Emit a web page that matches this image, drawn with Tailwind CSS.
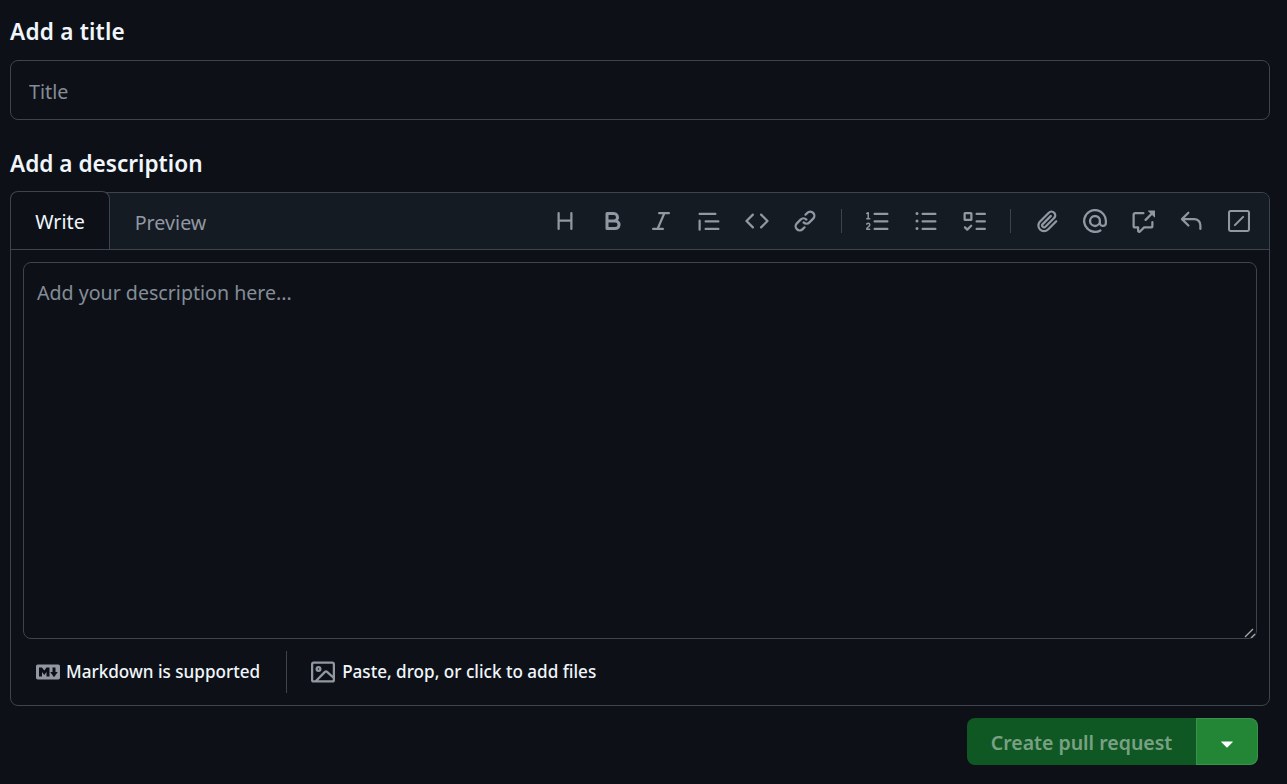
<!DOCTYPE html>
<html lang="en">
<head>
    <meta charset="UTF-8">
    <title>Open a pull request</title>
    <script src="https://cdn.jsdelivr.net/npm/@tailwindcss/browser@4"></script>
</head>
<body class="bg-[#0d1117] font-['Noto_Sans','Open_Sans',sans-serif] [color-scheme:dark] overflow-hidden">
    <div class="w-[1287px] h-[784px] pl-[10px] pr-[17px] pt-[16px]">
        <h2 class="text-[22.6px] leading-[32px] font-semibold text-[#f0f6fc] tracking-[0.2px]">Add a title</h2>
        <input type="text" placeholder="Title" class="block w-full h-[60px] mt-[12px] px-[18px] pt-[3px] text-[19.7px] bg-[#0d1117] border border-[#3d444d] rounded-[8px] placeholder:text-[#848d97] outline-none">

        <h2 class="mt-[28px] text-[22.6px] leading-[32px] font-semibold text-[#f0f6fc]">Add a description</h2>

        <div class="mt-[12px] h-[514px] border border-[#3d444d] rounded-[8px] flex flex-col">
            <!-- toolbar -->
            <div class="h-[57px] shrink-0 flex items-stretch bg-[#151b23] border-b border-[#3d444d] rounded-t-[8px]">
                <div class="w-[100px] h-[58px] -mt-[2px] -ml-[1px] pt-[3px] bg-[#0d1117] border border-b-0 border-[#3d444d] rounded-t-[8px] flex items-center justify-center text-[19.7px] text-[#f0f6fc]">Write</div>
                <div class="w-[123px] -ml-[1px] pt-[3px] flex items-center justify-center text-[19.7px] text-[#9198a1]">Preview</div>
                <div class="ml-auto pr-[6px] flex items-center text-[#9198a1]">
                    <span class="w-[48px] flex justify-center"><svg class="w-[24px] h-[24px]" viewBox="0 0 16 16" fill="currentColor"><path d="M3.75 2a.75.75 0 0 1 .75.75V7h7V2.75a.75.75 0 0 1 1.5 0v10.5a.75.75 0 0 1-1.5 0V8.5h-7v4.75a.75.75 0 0 1-1.5 0V2.75A.75.75 0 0 1 3.75 2Z"/></svg></span>
                    <span class="w-[48px] flex justify-center"><svg class="w-[24px] h-[24px]" viewBox="0 0 16 16" fill="currentColor"><path d="M4 2h4.5a3.501 3.501 0 0 1 2.852 5.53A3.499 3.499 0 0 1 9.5 14H4a1 1 0 0 1-1-1V3a1 1 0 0 1 1-1Zm1 7v3h4.5a1.5 1.5 0 0 0 0-3Zm3.5-2a1.5 1.5 0 0 0 0-3H5v3Z"/></svg></span>
                    <span class="w-[48px] flex justify-center"><svg class="w-[24px] h-[24px]" viewBox="0 0 16 16" fill="currentColor"><path d="M6 2.75A.75.75 0 0 1 6.75 2h6.5a.75.75 0 0 1 0 1.5h-2.505l-3.858 9H9.25a.75.75 0 0 1 0 1.5h-6.5a.75.75 0 0 1 0-1.5h2.505l3.858-9H6.75A.75.75 0 0 1 6 2.75Z"/></svg></span>
                    <span class="w-[48px] flex justify-center"><svg class="w-[24px] h-[24px]" viewBox="0 0 16 16" fill="currentColor"><path d="M1.75 2.5h10.5a.75.75 0 0 1 0 1.5H1.75a.75.75 0 0 1 0-1.5Zm4 5h8.5a.75.75 0 0 1 0 1.5h-8.5a.75.75 0 0 1 0-1.5Zm0 5h8.5a.75.75 0 0 1 0 1.5h-8.5a.75.75 0 0 1 0-1.5ZM2.5 7.75v6a.75.75 0 0 1-1.5 0v-6a.75.75 0 0 1 1.5 0Z"/></svg></span>
                    <span class="w-[48px] flex justify-center"><svg class="w-[24px] h-[24px]" viewBox="0 0 16 16" fill="currentColor"><path d="m11.28 3.22 4.25 4.25a.75.75 0 0 1 0 1.06l-4.25 4.25a.749.749 0 0 1-1.275-.326.749.749 0 0 1 .215-.734L13.94 8l-3.72-3.72a.749.749 0 0 1 .326-1.275.749.749 0 0 1 .734.215Zm-6.56 0a.751.751 0 0 1 1.042.018.751.751 0 0 1 .018 1.042L2.06 8l3.72 3.72a.749.749 0 0 1-.326 1.275.749.749 0 0 1-.734-.215L.47 8.53a.75.75 0 0 1 0-1.06Z"/></svg></span>
                    <span class="w-[48px] flex justify-center"><svg class="w-[24px] h-[24px]" viewBox="0 0 16 16" fill="currentColor"><path d="m7.775 3.275 1.25-1.25a3.5 3.5 0 1 1 4.95 4.95l-2.5 2.5a3.5 3.5 0 0 1-4.95 0 .751.751 0 0 1 .018-1.042.751.751 0 0 1 1.042-.018 1.998 1.998 0 0 0 2.83 0l2.5-2.5a2.002 2.002 0 0 0-2.83-2.83l-1.25 1.25a.751.751 0 0 1-1.042-.018.751.751 0 0 1-.018-1.042Zm-4.69 9.64a1.998 1.998 0 0 0 2.83 0l1.25-1.25a.751.751 0 0 1 1.042.018.751.751 0 0 1 .018 1.042l-1.25 1.25a3.5 3.5 0 1 1-4.95-4.95l2.5-2.5a3.5 3.5 0 0 1 4.95 0 .751.751 0 0 1-.018 1.042.751.751 0 0 1-1.042.018 1.998 1.998 0 0 0-2.83 0l-2.5 2.5a1.998 1.998 0 0 0 0 2.83Z"/></svg></span>
                    <span class="w-[1px] h-[24px] mx-[12px] bg-[#3d444d]"></span>
                    <span class="w-[48px] flex justify-center"><svg class="w-[24px] h-[24px]" viewBox="0 0 16 16" fill="currentColor"><path d="M5 3.25a.75.75 0 0 1 .75-.75h8.5a.75.75 0 0 1 0 1.5h-8.5A.75.75 0 0 1 5 3.25Zm0 5a.75.75 0 0 1 .75-.75h8.5a.75.75 0 0 1 0 1.5h-8.5A.75.75 0 0 1 5 8.25Zm0 5a.75.75 0 0 1 .75-.75h8.5a.75.75 0 0 1 0 1.5h-8.5a.75.75 0 0 1-.75-.75ZM.924 10.32a.5.5 0 0 1-.851-.525l.001-.001.001-.002.002-.004.007-.011c.097-.144.215-.273.348-.384.228-.19.588-.392 1.068-.392.468 0 .858.181 1.126.484.259.294.377.673.377 1.038 0 .987-.686 1.495-1.156 1.845l-.047.035c-.303.225-.522.4-.654.597h1.357a.5.5 0 0 1 0 1H.5a.5.5 0 0 1-.5-.5c0-1.005.692-1.52 1.167-1.875l.035-.025c.531-.396.8-.625.8-1.078a.57.57 0 0 0-.128-.376C1.806 10.068 1.695 10 1.5 10a.658.658 0 0 0-.429.163.835.835 0 0 0-.144.153ZM2.003 2.5V6h.503a.5.5 0 0 1 0 1H.5a.5.5 0 0 1 0-1h.503V3.308l-.28.14a.5.5 0 0 1-.446-.895l1.003-.5a.5.5 0 0 1 .723.447Z"/></svg></span>
                    <span class="w-[48px] flex justify-center"><svg class="w-[24px] h-[24px]" viewBox="0 0 16 16" fill="currentColor"><path d="M5.75 2.5h8.5a.75.75 0 0 1 0 1.5h-8.5a.75.75 0 0 1 0-1.5Zm0 5h8.5a.75.75 0 0 1 0 1.5h-8.5a.75.75 0 0 1 0-1.5Zm0 5h8.5a.75.75 0 0 1 0 1.5h-8.5a.75.75 0 0 1 0-1.5ZM2 14a1 1 0 1 1 0-2 1 1 0 0 1 0 2Zm1-6a1 1 0 1 1-2 0 1 1 0 0 1 2 0ZM2 4a1 1 0 1 1 0-2 1 1 0 0 1 0 2Z"/></svg></span>
                    <span class="w-[48px] flex justify-center"><svg class="w-[24px] h-[24px]" viewBox="0 0 16 16" fill="currentColor"><path d="M2 2h4a1 1 0 0 1 1 1v4a1 1 0 0 1-1 1H2a1 1 0 0 1-1-1V3a1 1 0 0 1 1-1Zm4.655 8.595a.75.75 0 0 1 0 1.06L4.03 14.28a.75.75 0 0 1-1.06 0l-1.5-1.5a.749.749 0 0 1 .326-1.275.749.749 0 0 1 .734.215l.97.97 2.095-2.095a.75.75 0 0 1 1.06 0ZM9.75 2.5h5.5a.75.75 0 0 1 0 1.5h-5.5a.75.75 0 0 1 0-1.5Zm0 5h5.5a.75.75 0 0 1 0 1.5h-5.5a.75.75 0 0 1 0-1.5Zm0 5h5.5a.75.75 0 0 1 0 1.5h-5.5a.75.75 0 0 1 0-1.5Zm-7.25-9v3h3v-3Z"/></svg></span>
                    <span class="w-[1px] h-[24px] mx-[12px] bg-[#3d444d]"></span>
                    <span class="w-[48px] flex justify-center"><svg class="w-[24px] h-[24px]" viewBox="0 0 16 16" fill="currentColor"><path d="M12.212 3.02a1.753 1.753 0 0 0-2.478.003l-5.83 5.83a3.007 3.007 0 0 0-.88 2.127c0 .795.315 1.551.88 2.116.567.567 1.333.89 2.126.89.79 0 1.548-.321 2.116-.89l5.48-5.48a.75.75 0 0 1 1.061 1.06l-5.48 5.48a4.492 4.492 0 0 1-3.177 1.33c-1.2 0-2.345-.487-3.187-1.33a4.483 4.483 0 0 1-1.32-3.177c0-1.195.475-2.341 1.32-3.186l5.83-5.83a3.25 3.25 0 0 1 5.553 2.297c0 .863-.343 1.691-.953 2.301L7.439 12.39c-.375.377-.884.59-1.416.593a1.998 1.998 0 0 1-1.412-.593 1.992 1.992 0 0 1 0-2.828l5.48-5.48a.751.751 0 0 1 1.042.018.751.751 0 0 1 .018 1.042l-5.48 5.48a.492.492 0 0 0 0 .707.499.499 0 0 0 .354.147.51.51 0 0 0 .361-.147l5.833-5.827a1.755 1.755 0 0 0 0-2.481Z"/></svg></span>
                    <span class="w-[48px] flex justify-center"><svg class="w-[24px] h-[24px]" viewBox="0 0 16 16" fill="currentColor"><path d="M4.75 2.37a6.501 6.501 0 0 0 6.5 11.26.75.75 0 0 1 .75 1.298A7.999 7.999 0 0 1 .989 4.148 8 8 0 0 1 16 7.75v1.5a2.75 2.75 0 0 1-5.072 1.475 3.999 3.999 0 0 1-6.65-4.19A4 4 0 0 1 12 8v1.25a1.25 1.25 0 0 0 2.5 0V7.867a6.5 6.5 0 0 0-9.75-5.496ZM10.5 8a2.5 2.5 0 1 0-5 0 2.5 2.5 0 0 0 5 0Z"/></svg></span>
                    <span class="w-[48px] flex justify-center"><svg class="w-[24px] h-[24px]" viewBox="0 0 16 16" fill="currentColor"><path d="M2.75 3.5a.25.25 0 0 0-.25.25v7.5c0 .138.112.25.25.25h2a.75.75 0 0 1 .75.75v2.19l2.72-2.72a.749.749 0 0 1 .53-.22h4.5a.25.25 0 0 0 .25-.25v-2.5a.75.75 0 0 1 1.5 0v2.5A1.75 1.75 0 0 1 13.25 13H9.06l-2.573 2.573A1.458 1.458 0 0 1 4 14.543V13H2.75A1.75 1.75 0 0 1 1 11.25v-7.5C1 2.784 1.784 2 2.75 2h5.5a.75.75 0 0 1 0 1.5ZM16 1.25v4.146a.25.25 0 0 1-.427.177L14.03 4.03l-3.75 3.75a.749.749 0 0 1-1.275-.326.749.749 0 0 1 .215-.734l3.75-3.75-1.543-1.543A.25.25 0 0 1 11.604 1h4.146a.25.25 0 0 1 .25.25Z"/></svg></span>
                    <span class="w-[48px] flex justify-center"><svg class="w-[24px] h-[24px]" viewBox="0 0 16 16" fill="currentColor"><path d="M6.78 1.97a.75.75 0 0 1 0 1.06L3.81 6h6.44A4.75 4.75 0 0 1 15 10.75v2.5a.75.75 0 0 1-1.5 0v-2.5a3.25 3.25 0 0 0-3.25-3.25H3.81l2.97 2.97a.749.749 0 0 1-.326 1.275.749.749 0 0 1-.734-.215L1.47 7.28a.75.75 0 0 1 0-1.06l4.25-4.25a.75.75 0 0 1 1.06 0Z"/></svg></span>
                    <span class="w-[48px] flex justify-center"><svg class="w-[22px] h-[22px]" viewBox="0 0 16 16" fill="currentColor"><path fill-rule="evenodd" d="M1.75 0h12.5C15.216 0 16 .784 16 1.75v12.5A1.75 1.75 0 0 1 14.25 16H1.75A1.75 1.75 0 0 1 0 14.25V1.75C0 .784.784 0 1.75 0Zm0 1.5a.25.25 0 0 0-.25.25v12.5c0 .138.112.25.25.25h12.5a.25.25 0 0 0 .25-.25V1.75a.25.25 0 0 0-.25-.25Z"/><path d="M10.47 4.47a.75.75 0 0 1 1.06 1.06l-6 6a.75.75 0 0 1-1.06-1.06Z"/></svg></span>
                </div>
            </div>

            <!-- body -->
            <div class="flex-1 px-[12px] pt-[12px] flex flex-col">
                <div class="relative h-[377px] shrink-0">
                    <textarea placeholder="Add your description here..." class="block w-full h-full resize-none px-[13px] pt-[16px] pb-[12px] text-[19.6px] leading-[28px] bg-[#0d1117] border border-[#3d444d] rounded-[8px] placeholder:text-[#848d97] outline-none"></textarea>
                    <svg class="absolute right-[1px] bottom-[1px] w-[12px] h-[11px] text-[#a8a8a8]" viewBox="0 0 12 11" fill="none" stroke="currentColor" stroke-width="1.3"><path d="M1 10 9 2M7 11l4-4"/></svg>
                </div>
                <div class="flex-1 flex items-center text-[#f0f6fc] text-[17.1px] font-medium">
                    <svg class="ml-[13px] w-[24px] h-[24px] text-[#9198a1]" viewBox="0 0 16 16" fill="currentColor"><path d="M14.85 3c.63 0 1.15.52 1.14 1.15v7.7c0 .63-.51 1.15-1.15 1.15H1.15C.52 13 0 12.48 0 11.84V4.15C0 3.52.52 3 1.15 3ZM9 11V5H7L5.5 7 4 5H2v6h2V8l1.5 1.92L7 8v3Zm2.99.5L14.5 8H13V5h-2v3H9.5Z"/></svg>
                    <span class="ml-[6px]">Markdown is supported</span>
                    <span class="w-[1px] h-[42px] ml-[26px] bg-[#3d444d]"></span>
                    <svg class="ml-[24px] w-[24px] h-[24px] text-[#9198a1]" viewBox="0 0 16 16" fill="currentColor"><path d="M16 13.25A1.75 1.75 0 0 1 14.25 15H1.75A1.75 1.75 0 0 1 0 13.25V2.75C0 1.784.784 1 1.75 1h12.5c.966 0 1.75.784 1.75 1.75ZM1.75 2.5a.25.25 0 0 0-.25.25v10.5c0 .138.112.25.25.25h.94l.03-.03 6.077-6.078a1.75 1.75 0 0 1 2.412-.06L14.5 10.31V2.75a.25.25 0 0 0-.25-.25Zm12.5 11a.25.25 0 0 0 .25-.25v-.917l-4.298-3.889a.25.25 0 0 0-.344.009L4.81 13.5ZM7 6a2 2 0 1 1-3.999.001A2 2 0 0 1 7 6ZM5.5 6a.5.5 0 1 0-1 0 .5.5 0 0 0 1 0Z"/></svg>
                    <span class="ml-[7px]">Paste, drop, or click to add files</span>
                </div>
            </div>
        </div>

        <!-- submit -->
        <div class="mt-[12px] pr-[12px] flex justify-end">
            <div class="h-[47px] w-[229px] pt-[3px] flex items-center justify-center bg-[#105823] rounded-l-[8px] text-[19.5px] font-semibold text-white/45">Create pull request</div>
            <div class="h-[47px] w-[62px] pt-[2px] flex items-center justify-center bg-[#238636] border border-white/10 rounded-r-[8px] text-white">
                <svg class="w-[26px] h-[26px]" viewBox="0 0 16 16" fill="currentColor"><path d="m4.427 7.427 3.396 3.396a.25.25 0 0 0 .354 0l3.396-3.396A.25.25 0 0 0 11.396 7H4.604a.25.25 0 0 0-.177.427Z"/></svg>
            </div>
        </div>
    </div>
</body>
</html>
